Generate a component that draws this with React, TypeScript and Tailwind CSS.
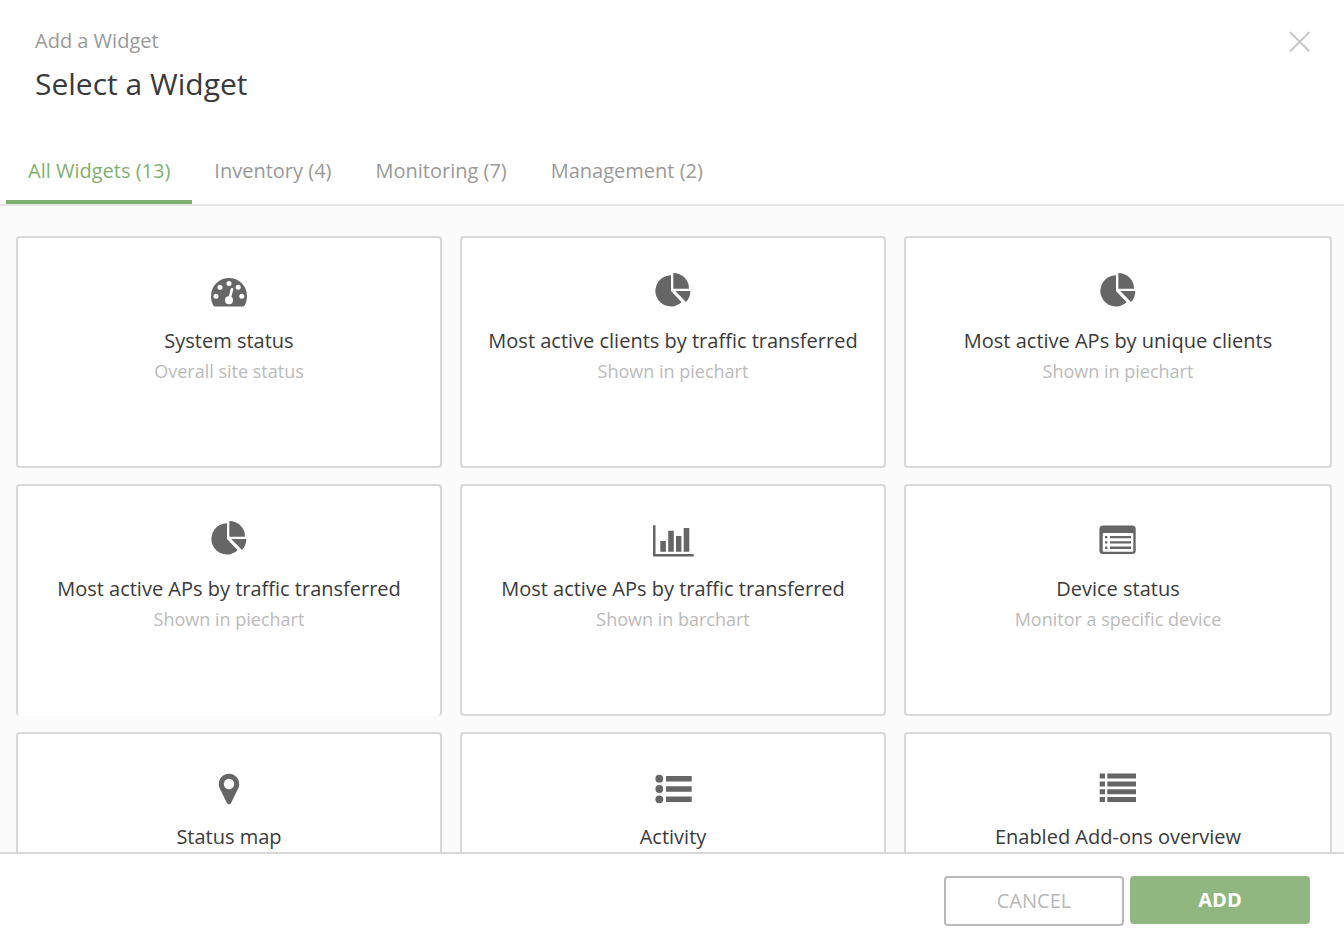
import { useState } from "react";
import type { ReactNode } from "react";
import { clsx } from "clsx";

type Widget = {
  id: string;
  title: string;
  description: string;
  icon: ReactNode;
  openBottom?: boolean;
};

const TABS = [
  { id: "all", label: "All Widgets", count: 13 },
  { id: "inventory", label: "Inventory", count: 4 },
  { id: "monitoring", label: "Monitoring", count: 7 },
  { id: "management", label: "Management", count: 2 },
];

function Icon({ children }: { children: ReactNode }) {
  return (
    <svg width="44" height="40" viewBox="0 0 44 40" fill="#666666" aria-hidden="true">
      {children}
    </svg>
  );
}

function GaugeIcon() {
  return (
    <Icon>
      <path d="M22 6a18 18 0 0 1 18 18c0 3.6-.8 6.700-2.300 9.400-.5.800-1.100 1.100-2 1.100H8.300c-.9 0-1.500-.3-2-1.100C4.800 30.700 4 27.600 4 24A18 18 0 0 1 22 6Z" />
      <g fill="#fff">
        <circle cx="9" cy="24.200" r="2.500" />
        <circle cx="13" cy="15.300" r="2.500" />
        <circle cx="22" cy="11.500" r="2.500" />
        <circle cx="31.200" cy="15.300" r="2.500" />
        <circle cx="34.800" cy="24.200" r="2.500" />
        <circle cx="22" cy="28.200" r="4" />
      </g>
      <path d="M22.400 27 25 17.300" stroke="#fff" strokeWidth="2.600" strokeLinecap="round" />
    </Icon>
  );
}

function PieIcon() {
  return (
    <Icon>
      <path d="M20 3.300A15.600 15.600 0 1 0 30.600 30.300L20 19Z" />
      <path d="M22.300 1A15.600 15.600 0 0 1 38 16.700H22.300Z" />
      <path d="M24.300 19H39.300A15.600 15.600 0 0 1 35 30Z" />
    </Icon>
  );
}

function BarChartIcon() {
  return (
    <Icon>
      <path d="M2 5.300h2.500V34h38.200v2.400H2Z" />
      <path d="M9.300 21h5.600v10.700H9.300ZM17.200 10.700h5.600v21h-5.600ZM25 16h5.400v15.700H25ZM32.700 8h5.600v23.700h-5.600Z" />
    </Icon>
  );
}

function DeviceIcon() {
  return (
    <Icon>
      <rect x="3.400" y="5.500" width="36.300" height="28.500" rx="3.500" />
      <rect x="6.700" y="13" width="30.600" height="18.700" rx="1" fill="#fff" />
      <path d="M9 15.900h2.400v2.400H9ZM14 15.900h21v2.400H14ZM9 21.200h2.400v2.400H9ZM14 21.200h21v2.400H14ZM9 26.500h2.400v2.400H9ZM14 26.500h21v2.400H14Z" />
    </Icon>
  );
}

function PinIcon() {
  return (
    <Icon>
      <path
        fillRule="evenodd"
        d="M22 5.700c5.700 0 10.200 4.500 10.200 10.300 0 1.500-.3 3-.9 4.300l-7.200 14.600c-.8 1.800-3.400 1.800-4.200 0l-7.200-14.600c-.6-1.300-.9-2.800-.9-4.300C11.800 10.200 16.300 5.700 22 5.700Zm0 5.100a5.200 5.200 0 1 0 0 10.400 5.200 5.200 0 0 0 0-10.400Z"
      />
    </Icon>
  );
}

function BulletListIcon() {
  return (
    <Icon>
      <circle cx="8.300" cy="10.700" r="3.900" />
      <circle cx="8.300" cy="21" r="3.900" />
      <circle cx="8.300" cy="31.300" r="3.900" />
      <path d="M15 8h25.700v5.500H15ZM15 18.300h25.700v5.500H15ZM15 28.600h25.700v5.500H15Z" />
    </Icon>
  );
}

function RowsIcon() {
  return (
    <Icon>
      <path d="M3.700 5.500H9v5H3.700ZM3.700 13.400H9v5H3.700ZM3.700 21.200H9v5H3.700ZM3.700 29H9v5H3.700Z" />
      <path d="M11.300 5.500H40v5H11.300ZM11.300 13.400H40v5H11.300ZM11.300 21.200H40v5H11.300ZM11.300 29H40v5H11.300Z" />
    </Icon>
  );
}

const WIDGETS: Widget[] = [
  { id: "system", title: "System status", description: "Overall site status", icon: <GaugeIcon /> },
  {
    id: "clients-traffic",
    title: "Most active clients by traffic transferred",
    description: "Shown in piechart",
    icon: <PieIcon />,
  },
  {
    id: "aps-clients",
    title: "Most active APs by unique clients",
    description: "Shown in piechart",
    icon: <PieIcon />,
  },
  {
    id: "aps-traffic-pie",
    title: "Most active APs by traffic transferred",
    description: "Shown in piechart",
    icon: <PieIcon />,
    openBottom: true,
  },
  {
    id: "aps-traffic-bar",
    title: "Most active APs by traffic transferred",
    description: "Shown in barchart",
    icon: <BarChartIcon />,
  },
  { id: "device", title: "Device status", description: "Monitor a specific device", icon: <DeviceIcon /> },
  { id: "map", title: "Status map", description: "", icon: <PinIcon /> },
  { id: "activity", title: "Activity", description: "", icon: <BulletListIcon /> },
  { id: "addons", title: "Enabled Add-ons overview", description: "", icon: <RowsIcon /> },
];

function WidgetCard({ widget }: { widget: Widget }) {
  return (
    <button
      type="button"
      className={clsx(
        "flex h-[232px] min-w-0 flex-col items-center rounded border-2 border-[#d8d8d8] bg-white px-2 pt-[34px]",
        widget.openBottom && "border-b-0",
      )}
    >
      {widget.icon}
      <span className="mt-3.5 text-[20px] leading-[30px] text-[#3a3a3a]">{widget.title}</span>
      {widget.description && (
        <span className="text-[18px] leading-[30px] text-[#bbbbbb]">{widget.description}</span>
      )}
    </button>
  );
}

export default function App() {
  const [activeTab, setActiveTab] = useState("all");

  return (
    <div
      role="dialog"
      aria-labelledby="dialog-title"
      className="flex h-screen flex-col bg-white font-['Open_Sans',sans-serif]"
    >
      <header className="flex items-start justify-between px-[35px] pt-[26px]">
        <div>
          <p className="text-[20px] leading-[30px] text-[#999999]">Add a Widget</p>
          <h1 id="dialog-title" className="mt-2 text-[30px] leading-[40px] text-[#3a3a3a]">
            Select a Widget
          </h1>
        </div>
        <button type="button" aria-label="Close" className="-mt-1.5 -mr-3 p-2.5">
          <svg width="24" height="24" viewBox="0 0 24 24" stroke="#c8c8c8" strokeWidth="2" aria-hidden="true">
            <path d="M3 2 22.500 21.500M22.500 2 3 21.500" />
          </svg>
        </button>
      </header>

      <div role="tablist" className="mt-9 flex border-b-2 border-[#e6e6e6] pl-1.5">
        {TABS.map((tab) => (
          <button
            key={tab.id}
            type="button"
            role="tab"
            aria-selected={tab.id === activeTab}
            onClick={() => setActiveTab(tab.id)}
            className={clsx(
              "border-b-4 px-[22px] pt-4 pb-3.5 text-[20px] leading-[30px]",
              tab.id === activeTab ? "border-[#7fb06f] text-[#7fb06f]" : "border-transparent text-[#999999]",
            )}
          >
            {tab.label} ({tab.count})
          </button>
        ))}
      </div>

      <main className="min-h-0 flex-1 overflow-y-auto bg-[#fbfbfb] pt-[30px] pr-3 pl-4 [scrollbar-width:none]">
        <div className="grid grid-cols-[213fr_213fr_214fr] gap-x-[18px] gap-y-4">
          {WIDGETS.map((widget) => (
            <WidgetCard key={widget.id} widget={widget} />
          ))}
        </div>
      </main>

      <footer className="flex items-start justify-end gap-1.5 border-t-2 border-[#d8d8d8] pt-[22px] pr-[34px] pb-4">
        <button
          type="button"
          className="h-[50px] w-[180px] rounded border-2 border-[#b8b8b8] bg-white text-[20px] text-[#b8b8b8]"
        >
          CANCEL
        </button>
        <button type="button" className="h-12 w-[180px] rounded bg-[#90b77f] text-[20px] font-bold text-white">
          ADD
        </button>
      </footer>
    </div>
  );
}
